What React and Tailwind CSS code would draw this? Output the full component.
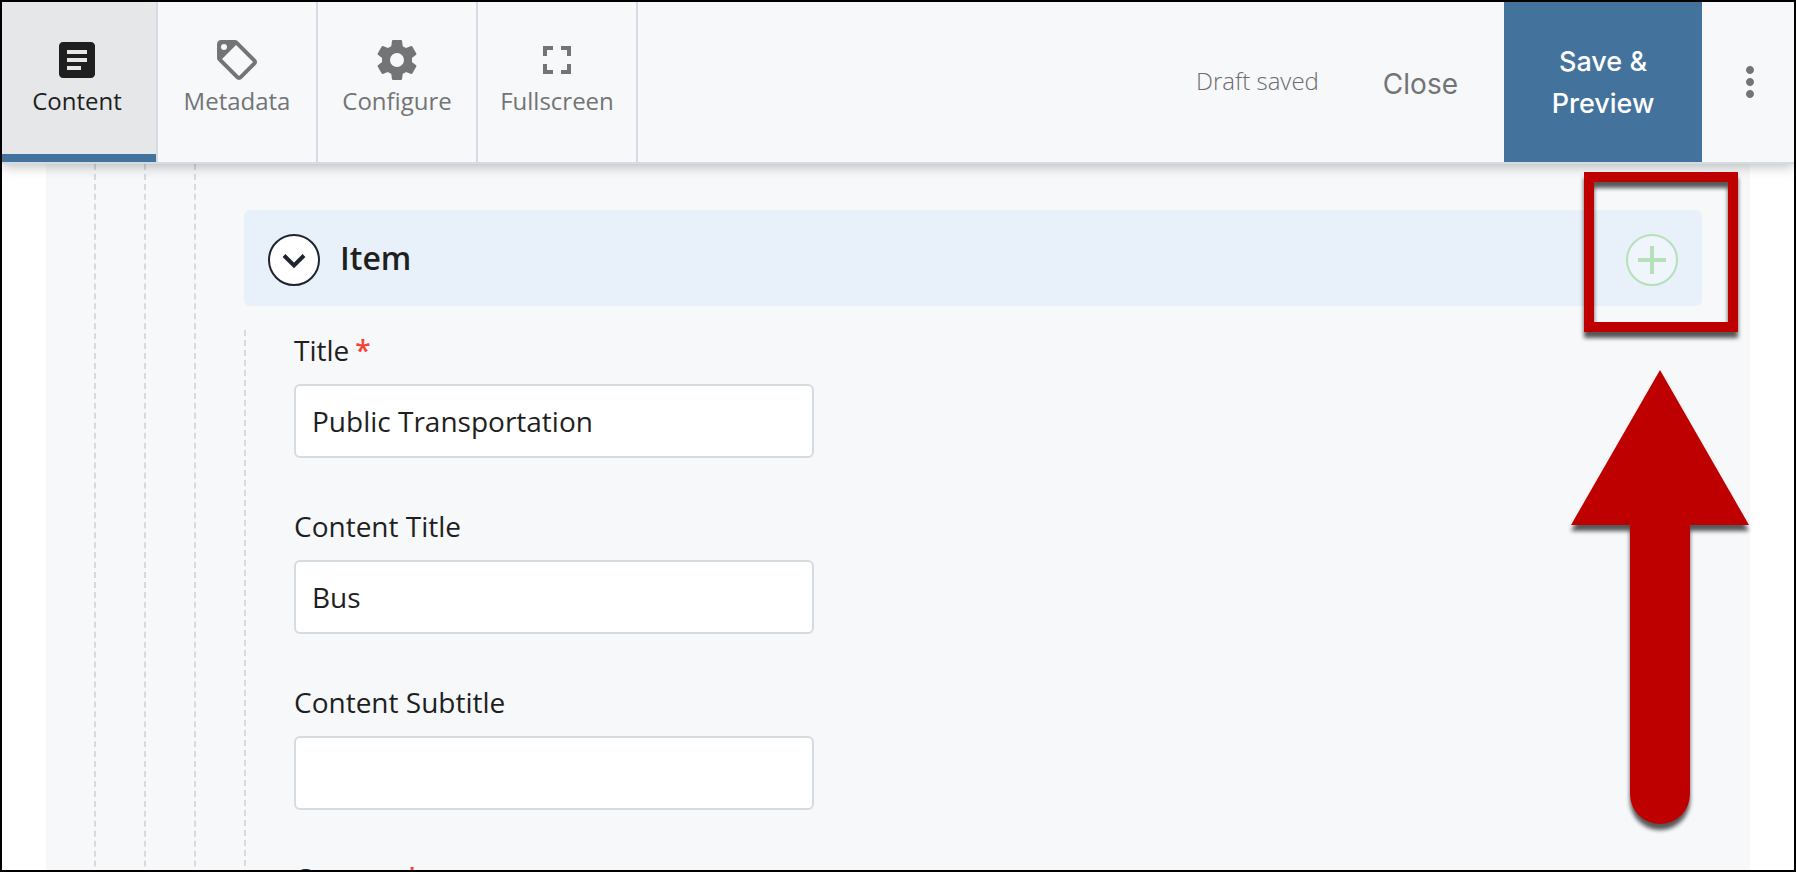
import { MdArticle, MdFullscreen, MdMoreVert } from "react-icons/md";

const TagIcon = () => (
  <svg viewBox="0 0 24 24" className="size-12 fill-current" aria-hidden="true">
    <path d="M5.5,7A1.5,1.5 0 0,1 4,5.5A1.5,1.5 0 0,1 5.5,4A1.5,1.5 0 0,1 7,5.5A1.5,1.5 0 0,1 5.5,7M21.41,11.58L12.41,2.58C12.05,2.22 11.55,2 11,2H4C2.89,2 2,2.89 2,4V11C2,11.55 2.22,12.05 2.59,12.41L11.58,21.41C11.95,21.77 12.45,22 13,22C13.55,22 14.05,21.77 14.41,21.41L21.41,14.41C21.78,14.05 22,13.55 22,13C22,12.44 21.77,11.94 21.41,11.58M13,20L4.5,11.5L11.5,4.5L20,13Z" fillRule="evenodd" />
  </svg>
);

const CogIcon = () => (
  <svg viewBox="0 0 24 24" className="size-12 fill-current" aria-hidden="true">
    <path d="M12,15.5A3.5,3.5 0 0,1 8.5,12A3.5,3.5 0 0,1 12,8.5A3.5,3.5 0 0,1 15.5,12A3.5,3.5 0 0,1 12,15.5M19.43,12.97C19.47,12.65 19.5,12.33 19.5,12C19.5,11.67 19.47,11.34 19.43,11L21.54,9.37C21.73,9.22 21.78,8.95 21.66,8.73L19.66,5.27C19.54,5.05 19.27,4.96 19.05,5.05L16.56,6.05C16.04,5.66 15.5,5.32 14.87,5.07L14.5,2.42C14.46,2.18 14.25,2 14,2H10C9.75,2 9.54,2.18 9.5,2.42L9.13,5.07C8.5,5.32 7.96,5.66 7.44,6.05L4.95,5.05C4.73,4.96 4.46,5.05 4.34,5.27L2.34,8.73C2.21,8.95 2.27,9.22 2.46,9.37L4.57,11C4.53,11.34 4.5,11.67 4.5,12C4.5,12.33 4.53,12.65 4.57,12.97L2.46,14.63C2.27,14.78 2.21,15.05 2.34,15.27L4.34,18.73C4.46,18.95 4.73,19.03 4.95,18.95L7.44,17.94C7.96,18.34 8.5,18.68 9.13,18.93L9.5,21.58C9.54,21.82 9.75,22 10,22H14C14.25,22 14.46,21.82 14.5,21.58L14.87,18.93C15.5,18.67 16.04,18.34 16.56,17.94L19.05,18.95C19.27,19.03 19.54,18.95 19.66,18.73L21.66,15.27C21.78,15.05 21.73,14.78 21.54,14.63L19.43,12.97Z" fillRule="evenodd" />
  </svg>
);

const tabs = [
  { name: "Content", icon: <MdArticle className="size-12" />, active: true },
  { name: "Metadata", icon: <TagIcon /> },
  { name: "Configure", icon: <CogIcon /> },
  { name: "Fullscreen", icon: <MdFullscreen className="size-12" /> },
];

const fields = [
  { id: "title", label: "Title", value: "Public Transportation", required: true },
  { id: "content-title", label: "Content Title", value: "Bus" },
  { id: "content-subtitle", label: "Content Subtitle", value: "" },
  { id: "content", label: "Content", value: "", required: true },
];

const Tab = ({ tab }) => (
  <button
    type="button"
    className={`flex w-40 flex-col items-center border-r-2 border-[#d4dbe2] pt-[34px] text-2xl leading-[34px] ${
      tab.active ? "bg-[#e6e7e9] text-[#1f1f1f] shadow-[inset_0_-8px_0_#43729c]" : "text-[#737476]"
    }`}
  >
    {tab.icon}
    <span>{tab.name}</span>
  </button>
);

const Toolbar = () => (
  <header className="relative z-10 flex h-[162px] shrink-0 border-b-2 border-[#d4dbe2] bg-[#f7f8fa] shadow-[0_2px_12px_rgba(0,0,0,0.28)]">
    <nav className="-ml-1 flex">
      {tabs.map((tab) => (
        <Tab key={tab.name} tab={tab} />
      ))}
    </nav>
    <div className="ml-auto flex items-center">
      <span className="pb-0.5 text-2xl font-light text-[#6b6c6e]">Draft saved</span>
      <button type="button" className="mr-[46px] ml-16 pt-1 font-['Inter',sans-serif] text-[28px] text-[#737476]">
        Close
      </button>
      <button
        type="button"
        className="h-full w-[198px] bg-[#43729c] px-8 pt-0.5 font-['Inter',sans-serif] text-[27px] leading-[42px] font-medium text-white"
      >
        Save &amp; Preview
      </button>
      <button type="button" aria-label="More" className="flex w-[92px] justify-center pl-1 text-[#737476]">
        <MdMoreVert className="size-12" />
      </button>
    </div>
  </header>
);

const Field = ({ field }) => (
  <div className="flex flex-col">
    <label htmlFor={field.id} className="text-[28px] leading-10">
      {field.label}
      {field.required && <span className="ml-1.5 font-semibold text-[#f44336]">*</span>}
    </label>
    <input
      id={field.id}
      type="text"
      defaultValue={field.value}
      className="mt-3.5 h-[74px] w-[520px] max-w-full rounded-md border-2 border-[#d6dbe2] bg-white px-4 text-[28px] outline-none"
    />
  </div>
);

// red frame and arrow that point at the add button
const Callout = () => (
  <div className="pointer-events-none absolute top-[170px] right-11 z-20 flex w-[180px] flex-col items-center">
    <div className="ml-0.5 h-40 w-[154px] border-10 border-[#bf0000] drop-shadow-[0_6px_2px_rgba(0,0,0,0.65)]" />
    <svg viewBox="0 0 180 456" className="mt-[38px] h-[456px] w-[180px] overflow-visible drop-shadow-[0_6px_2px_rgba(0,0,0,0.65)]">
      <path d="M90 0 179 155H120V424A30 30 0 0 1 60 424V155H1Z" fill="#bf0000" />
    </svg>
  </div>
);

const ItemGroup = () => (
  <section className="pt-[46px]">
    <div className="flex h-24 items-center rounded-md bg-[#e8f1f9] px-6">
      <button
        type="button"
        aria-label="Collapse item"
        className="mt-1 flex size-[52px] items-center justify-center rounded-full border-2 border-[#1f2430] bg-white"
      >
        <svg viewBox="0 0 24 24" className="size-10 fill-none stroke-[#1f2430]" aria-hidden="true">
          <path d="M6 9.3 12 15.2 18 9.3" strokeWidth="2.4" />
        </svg>
      </button>
      <h2 className="ml-5 text-[32px] font-semibold">Item</h2>
      <button
        type="button"
        aria-label="Add item"
        className="mt-1 ml-auto flex size-[52px] items-center justify-center rounded-full border-2 border-[#b5e1b9] bg-[#f0f4fc]"
      >
        <svg viewBox="0 0 28 28" className="size-7 fill-none stroke-[#b5e1b9]" aria-hidden="true">
          <path d="M14 0V28M0 14H28" strokeWidth="4" />
        </svg>
      </button>
    </div>
    <div className="mt-6 flex flex-col gap-12 border-l-2 border-dashed border-[#d6dbe2] pl-12">
      {fields.map((field) => (
        <Field key={field.id} field={field} />
      ))}
    </div>
  </section>
);

const App = () => {
  return (
    <div className="relative flex h-screen flex-col overflow-hidden border-2 border-black bg-white font-['Open_Sans',sans-serif] text-[#1f1f1f]">
      <Toolbar />
      <main className="mx-11 min-h-0 flex-1 overflow-hidden bg-[#f7f8fa] px-12">
        <div className="border-l-2 border-dashed border-[#d6dbe2] pl-12">
          <div className="border-l-2 border-dashed border-[#d6dbe2] pl-12">
            <div className="border-l-2 border-dashed border-[#d6dbe2] pl-12">
              <ItemGroup />
            </div>
          </div>
        </div>
      </main>
      <Callout />
    </div>
  );
};

export default App;
